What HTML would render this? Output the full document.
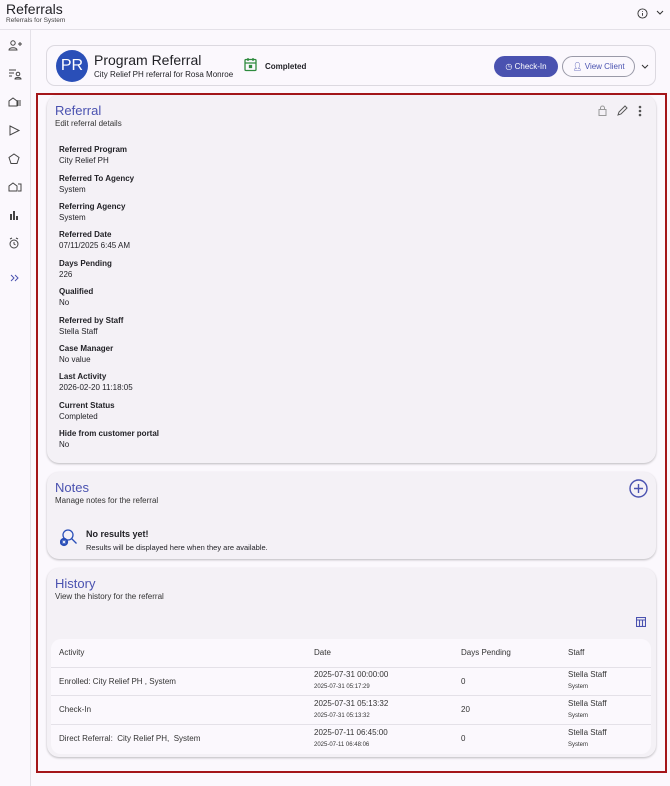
<!DOCTYPE html>
<html><head><meta charset="utf-8"><style>
*{box-sizing:border-box;margin:0;padding:0}
body{width:670px;height:786px;background:#fbf8fd;font-family:"Liberation Sans",sans-serif;color:#1f1f24;position:relative;overflow:hidden;font-size:8px}
.abs{position:absolute}
.hdr{left:0;top:0;width:670px;height:30px;border-bottom:1px solid #e4e1e8;background:#fbf8fd}
.side{left:0;top:30px;width:31px;height:756px;border-right:1px solid #e4e1e8}
.card{background:#f4f1f6;border-radius:12px;box-shadow:0 1px 2px rgba(0,0,0,.25)}
.ttl{color:#4a52b0;font-size:13px}
.sub{font-size:8px;color:#333}
.f{position:absolute;left:59px}
.f b{display:block;font-size:8px;font-weight:bold}
.f span{display:block;font-size:8px;margin-top:2px}
table{border-collapse:collapse;width:100%;font-size:8px}
td,th{text-align:left;padding:0 8px;color:#333}
th{font-weight:normal;height:28px}
td{height:28.5px;border-top:1px solid #e4e1e8;line-height:11px}
small{font-size:6px}
</style></head><body>
<div class="abs hdr">
 <div class="abs" style="left:6px;top:1px;font-size:14px">Referrals</div>
 <div class="abs" style="left:6px;top:17px;font-size:6.5px;color:#444">Referrals for System</div>
 <svg class="abs" style="left:637px;top:8px" width="11" height="11" viewBox="0 0 12 12"><circle cx="6" cy="6" r="5" fill="none" stroke="#333"/><path d="M6 5.5v3M6 3.5v.8" stroke="#333"/></svg>
 <svg class="abs" style="left:656px;top:10px" width="8" height="6"><path d="M1 1l3 3 3-3" fill="none" stroke="#333"/></svg>
</div>
<div class="abs side">
 <svg width="31" height="260" fill="none" stroke="#444" stroke-width="1">
  <g transform="translate(9,10)"><circle cx="4" cy="3" r="2.2"/><path d="M0 10c0-3 8-3 8 0z"/><path d="M9 4h4M11 2v4"/></g>
  <g transform="translate(9,39)"><path d="M0 1h7M0 4h5M0 7h3"/><circle cx="9" cy="5" r="1.8"/><path d="M6 10c0-2 6-2 6 0z"/></g>
  <g transform="translate(9,67)"><path d="M0 9V4l4-3 4 3v5z"/><path d="M9 3v6M11 3v6"/></g>
  <g transform="translate(10,96)"><path d="M0 0l9 4.5L0 9z"/></g>
  <g transform="translate(9,124)"><path d="M5 0l5 3.5-2 6H2L0 3.5z"/></g>
  <g transform="translate(8,152)"><path d="M1 9V4l4-3 4 3v5zM10 2h3v7h-3"/></g>
  <g transform="translate(10,181)" fill="#444" stroke="none"><rect x="0" y="3" width="2" height="6"/><rect x="3" y="0" width="2" height="9"/><rect x="6" y="5" width="2" height="4"/></g>
  <g transform="translate(9,208)"><circle cx="5" cy="6" r="4"/><path d="M5 4v2l1.5 1M1 1l2-1M9 1L7 0"/></g>
  <g transform="translate(11,245)" stroke="#4a52b0"><path d="M0 0l3 3-3 3M4 0l3 3-3 3"/></g>
 </svg>
</div>
<div class="abs" style="left:46px;top:45px;width:610px;height:41px;border:1px solid #dcd9e0;border-radius:9px;background:#fbf8fd">
 <div class="abs" style="left:9px;top:4px;width:32px;height:32px;border-radius:50%;background:#2a4fb8;color:#fff;font-size:16px;line-height:32px;text-align:center">PR</div>
 <div class="abs" style="left:47px;top:6px;font-size:14px">Program Referral</div>
 <div class="abs" style="left:47px;top:24px;font-size:8px">City Relief PH referral for Rosa Monroe</div>
 <svg class="abs" style="left:197px;top:11px" width="13" height="15" viewBox="0 0 13 15" fill="none" stroke="#2e8b3e" stroke-width="1.3"><rect x="1" y="2.5" width="11" height="11" rx="1"/><path d="M1 6h11M4 1v3M9 1v3"/><rect x="5.5" y="8.5" width="2" height="2" fill="#2e8b3e"/></svg>
 <div class="abs" style="left:218px;top:16px;font-size:8px;font-weight:bold">Completed</div>
 <div class="abs" style="left:447px;top:10px;width:64px;height:21px;border-radius:11px;background:#4a52b0;color:#fff;font-size:8px;line-height:21px;text-align:center">◷ Check-In</div>
 <div class="abs" style="left:515px;top:10px;width:73px;height:21px;border-radius:11px;border:1px solid #9a9aa8;color:#4a52b0;font-size:8px;line-height:19px;text-align:center">👤︎ View Client</div>
 <svg class="abs" style="left:594px;top:18px" width="8" height="6"><path d="M1 1l3 3 3-3" fill="none" stroke="#333"/></svg>
</div>
<div class="abs" style="left:36px;top:93px;width:631px;height:680px;border:2px solid #a4161a"></div>
<div class="abs card" style="left:47px;top:95px;width:609px;height:368px">
 <div class="abs ttl" style="left:8px;top:8px">Referral</div>
 <div class="abs sub" style="left:8px;top:24px">Edit referral details</div>
 <svg class="abs" style="left:551px;top:10px" width="45" height="12" fill="none" stroke="#555"><rect x="1" y="4.5" width="7" height="6" stroke="#999"/><path d="M2.5 4.5V3a2 2 0 014 0v1.5" stroke="#999"/><path d="M20 10l1-3 6-6 2 2-6 6z"/><circle cx="42" cy="2" r=".8" fill="#555"/><circle cx="42" cy="6" r=".8" fill="#555"/><circle cx="42" cy="10" r=".8" fill="#555"/></svg>
</div>
<div class="f" style="top:145px"><b>Referred Program</b><span>City Relief PH</span></div>
<div class="f" style="top:174px"><b>Referred To Agency</b><span>System</span></div>
<div class="f" style="top:202px"><b>Referring Agency</b><span>System</span></div>
<div class="f" style="top:230px"><b>Referred Date</b><span>07/11/2025 6:45 AM</span></div>
<div class="f" style="top:259px"><b>Days Pending</b><span>226</span></div>
<div class="f" style="top:287px"><b>Qualified</b><span>No</span></div>
<div class="f" style="top:316px"><b>Referred by Staff</b><span>Stella Staff</span></div>
<div class="f" style="top:344px"><b>Case Manager</b><span>No value</span></div>
<div class="f" style="top:372px"><b>Last Activity</b><span>2026-02-20 11:18:05</span></div>
<div class="f" style="top:401px"><b>Current Status</b><span>Completed</span></div>
<div class="f" style="top:429px"><b>Hide from customer portal</b><span>No</span></div>
<div class="abs card" style="left:47px;top:472px;width:609px;height:87px">
 <div class="abs ttl" style="left:8px;top:8px">Notes</div>
 <div class="abs sub" style="left:8px;top:24px">Manage notes for the referral</div>
 <svg class="abs" style="left:582px;top:7px" width="19" height="19" fill="none" stroke="#4a52b0" stroke-width="1.4"><circle cx="9.5" cy="9.5" r="8.5"/><path d="M9.5 5v9M5 9.5h9"/></svg>
 <svg class="abs" style="left:13px;top:57px" width="18" height="19" fill="none" stroke="#2a4fb8" stroke-width="1.3"><circle cx="8" cy="6" r="5"/><path d="M11.5 9.5l5 5"/><circle cx="4" cy="13" r="3.5" fill="#2a4fb8"/><path d="M2.7 11.7l2.6 2.6M5.3 11.7l-2.6 2.6" stroke="#fff" stroke-width=".9"/></svg>
 <div class="abs" style="left:39px;top:57px;font-size:9px;font-weight:bold">No results yet!</div>
 <div class="abs" style="left:39px;top:71px;font-size:7.5px">Results will be displayed here when they are available.</div>
</div>
<div class="abs card" style="left:47px;top:568px;width:609px;height:189px">
 <div class="abs ttl" style="left:8px;top:8px">History</div>
 <div class="abs sub" style="left:8px;top:24px">View the history for the referral</div>
 <svg class="abs" style="left:589px;top:49px" width="10" height="10" fill="none" stroke="#4a52b0" stroke-width="1.1"><rect x=".5" y=".5" width="9" height="9"/><path d="M.5 3h9M3.5 3v6.5M6.5 3v6.5"/></svg>
 <div class="abs" style="left:4px;top:71px;width:600px;height:115px;background:#fbf8fd;border-radius:10px;overflow:hidden">
  <table><tr><th style="width:255px">Activity</th><th style="width:147px">Date</th><th style="width:107px">Days Pending</th><th>Staff</th></tr>
  <tr><td>Enrolled: City Relief PH , System</td><td>2025-07-31 00:00:00<br><small>2025-07-31 05:17:29</small></td><td>0</td><td>Stella Staff<br><small>System</small></td></tr>
  <tr><td>Check-In</td><td>2025-07-31 05:13:32<br><small>2025-07-31 05:13:32</small></td><td>20</td><td>Stella Staff<br><small>System</small></td></tr>
  <tr><td>Direct Referral:&nbsp; City Relief PH,&nbsp; System</td><td>2025-07-11 06:45:00<br><small>2025-07-11 06:48:06</small></td><td>0</td><td>Stella Staff<br><small>System</small></td></tr>
  </table>
 </div>
</div>
</body></html>
